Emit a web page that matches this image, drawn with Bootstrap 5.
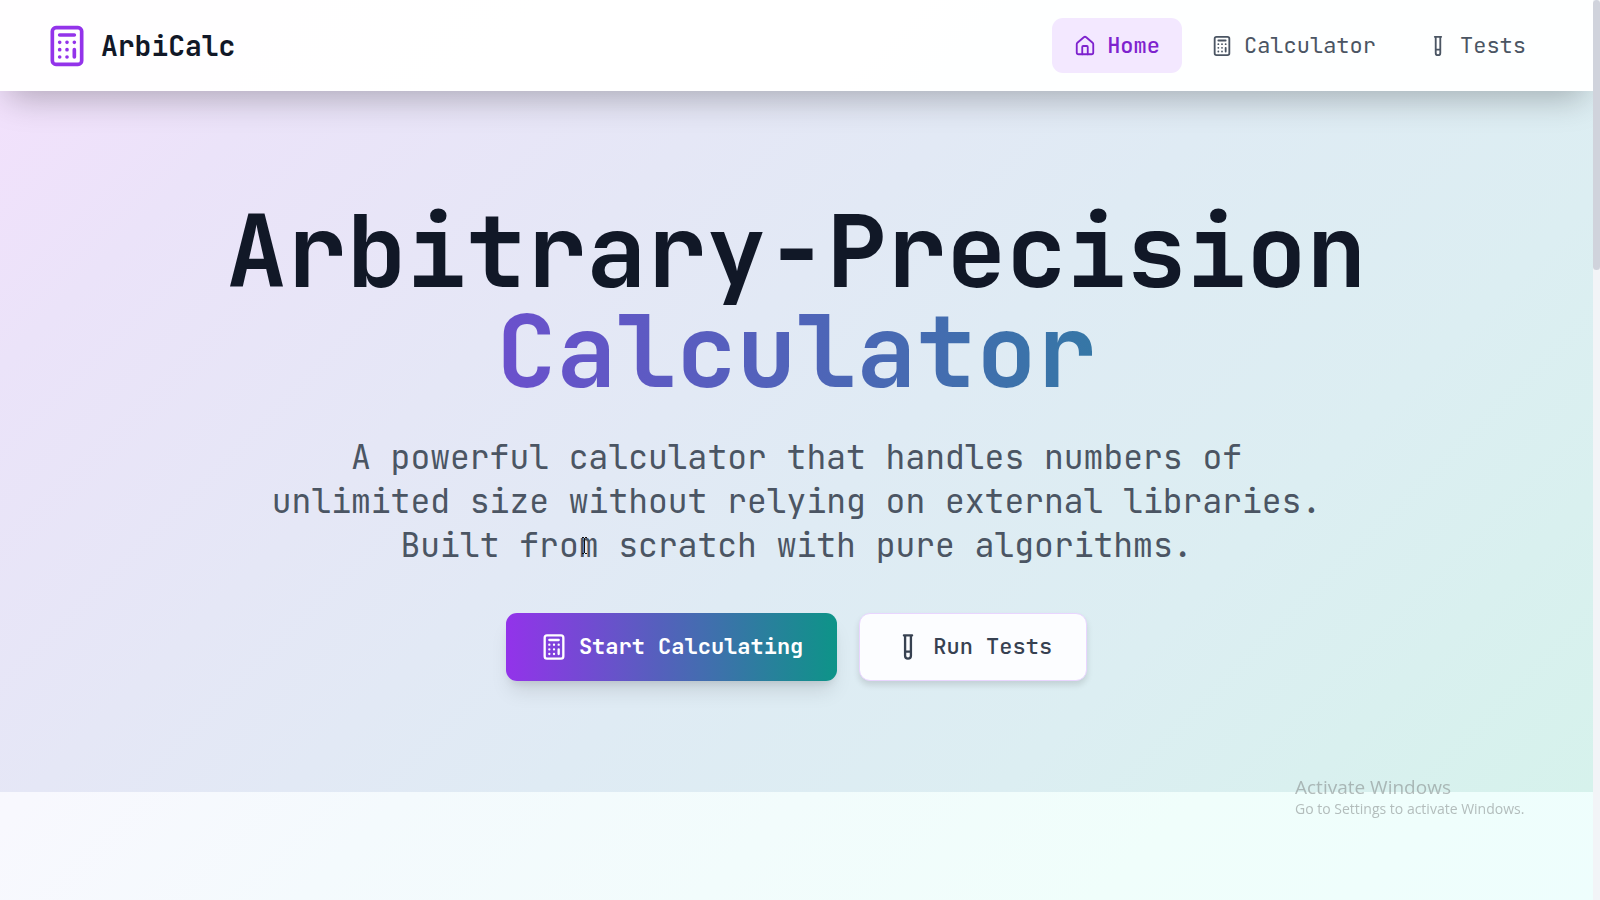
<!DOCTYPE html>
<html lang="en">
<head>
<meta charset="utf-8">
<meta name="viewport" content="width=device-width, initial-scale=1">
<title>ArbiCalc</title>
<link href="https://cdn.jsdelivr.net/npm/bootstrap@5.3.0/dist/css/bootstrap.min.css" rel="stylesheet">
<style>
  body {
    font-family: "JetBrains Mono", "DejaVu Sans Mono", monospace;
    font-size: 22px;
    line-height: 32px;
    color: #111827;
    padding-right: 7px;
    background: linear-gradient(135deg, #faf5ff, #f8f8fe 33%, #f4fafd 48%, #f0fefb 80%, #eefefd);
  }
  .icon { fill: none; stroke: currentColor; stroke-width: 2; stroke-linecap: round; stroke-linejoin: round; flex: none; }
  .topbar {
    background: rgba(255, 255, 255, .9);
    box-shadow: 0 14px 34px -8px rgba(0, 0, 0, .28);
    padding: 18px 45px;
    z-index: 2;
  }
  .topbar .navbar-brand { color: #111827; gap: 12px; font-size: 28px; line-height: 44px; font-weight: 700; }
  .topbar .navbar-brand svg { color: #9333ea; }
  .topbar .navbar-nav { gap: 7px; }
  .topbar .navbar-nav .nav-link {
    color: #4b5563;
    padding: 12px 22px 11px;
    border-radius: 11px;
    gap: 11px;
  }
  .topbar .navbar-nav .nav-link.active { background: #f3e8ff; color: #7e22ce; font-weight: 500; }
  .hero {
    background: linear-gradient(135deg, #f2e1fc, #ebe3f9 12%, #e5e7f6 32%, #dfebf4 54%, #dceef2 74%, #d6f2ec);
    padding: 110px 44px 111px;
  }
  .hero h1 { font-size: 100px; line-height: 100px; font-weight: 700; margin-bottom: 34px; }
  .hero h1 span {
    background: linear-gradient(to right, #9333ea, #0d9488);
    -webkit-background-clip: text;
    background-clip: text;
    color: transparent;
  }
  .tagline { font-size: 33px; line-height: 44px; color: #4b5563; max-width: 1068px; margin-bottom: 46px; }
  .text-cursor { left: 2px; top: 14px; }
  .cta-row { gap: 22px; }
  .cta { border-radius: 11px; gap: 11px; font-size: 22px; line-height: 32px; padding: 18px 34px; }
  .cta-main, .cta-main:hover {
    color: #fff;
    border: 0;
    font-weight: 600;
    background: linear-gradient(to right, #9333ea, #0d9488);
    box-shadow: 0 14px 20px -4px rgba(0, 0, 0, .1), 0 6px 8px -4px rgba(0, 0, 0, .1);
  }
  .cta-alt, .cta-alt:hover {
    color: #374151;
    background: #fcfdff;
    border: 1px solid #e9d5ff;
    padding: 17px 34px;
    font-weight: 500;
    box-shadow: 0 4px 6px rgba(0, 0, 0, .12);
  }
  .watermark {
    right: 69px;
    bottom: 80px;
    width: 236px;
    font: 15px/22px "Segoe UI", "Open Sans", sans-serif;
    color: rgba(130, 135, 135, .55);
    pointer-events: none;
  }
  .watermark strong { font-size: 19px; font-weight: 400; }
  .watermark span { font-size: 14px; }
  .scroll-track { width: 7px; background: #f2f4f7; z-index: 5; }
  .scroll-thumb { height: 30%; background: #d0d3dc; border-radius: 4px; }
</style>
</head>
<body class="min-vh-100 position-relative">
<svg class="d-none" xmlns="http://www.w3.org/2000/svg">
  <symbol id="calc" viewBox="0 0 24 24">
    <rect x="4" y="2" width="16" height="20" rx="2"/>
    <path d="M8 6h8M16 14v4M16 10h.01M12 10h.01M8 10h.01M12 14h.01M8 14h.01M12 18h.01M8 18h.01"/>
  </symbol>
  <symbol id="house" viewBox="0 0 24 24">
    <path d="M15 21v-8a1 1 0 0 0-1-1h-4a1 1 0 0 0-1 1v8"/>
    <path d="M3 10a2 2 0 0 1 .709-1.528l7-5.999a2 2 0 0 1 2.582 0l7 5.999A2 2 0 0 1 21 10v9a2 2 0 0 1-2 2H5a2 2 0 0 1-2-2z"/>
  </symbol>
  <symbol id="tube" viewBox="0 0 24 24">
    <path d="M14.5 2v17.5c0 1.4-1.1 2.5-2.5 2.5s-2.5-1.1-2.5-2.5V2M8.5 2h7M14.5 16h-5"/>
  </symbol>
</svg>

<header class="topbar navbar navbar-expand position-relative d-flex justify-content-between">
  <a class="navbar-brand d-flex align-items-center p-0 m-0" href="#">
    <svg class="icon" width="44" height="44" aria-hidden="true"><use href="#calc"/></svg>
    <span>ArbiCalc</span>
  </a>
  <nav class="navbar-nav" aria-label="Main">
    <a class="nav-link active d-flex align-items-center" aria-current="page" href="#home"><svg class="icon" width="22" height="22" aria-hidden="true"><use href="#house"/></svg>Home</a>
    <a class="nav-link d-flex align-items-center" href="#calculator"><svg class="icon" width="22" height="22" aria-hidden="true"><use href="#calc"/></svg>Calculator</a>
    <a class="nav-link d-flex align-items-center" href="#tests"><svg class="icon" width="22" height="22" aria-hidden="true"><use href="#tube"/></svg>Tests</a>
  </nav>
</header>

<main>
  <section class="hero text-center" id="home">
    <h1>Arbitrary-Precision <span class="d-block">Calculator</span></h1>
    <p class="tagline mx-auto">A powerful calculator that handles numbers of unlimited size without relying on external libraries. Built fro<span class="position-relative"><svg class="text-cursor position-absolute" width="7" height="17" viewBox="0 0 7 17" fill="none" stroke="#111" aria-hidden="true"><path d="M1 .5h2M4 .5h2M3.500 1v15M1 16.500h2M4 16.500h2"/></svg></span>m scratch with pure algorithms.</p>
    <div class="cta-row d-flex flex-wrap justify-content-center">
      <button type="button" class="btn cta cta-main d-flex align-items-center"><svg class="icon" width="28" height="28" aria-hidden="true"><use href="#calc"/></svg>Start Calculating</button>
      <button type="button" class="btn cta cta-alt d-flex align-items-center"><svg class="icon" width="28" height="28" aria-hidden="true"><use href="#tube"/></svg>Run Tests</button>
    </div>
  </section>
</main>

<div class="watermark position-fixed">
  <strong class="d-block">Activate Windows</strong>
  <span class="d-block">Go to Settings to activate Windows.</span>
</div>
<div class="scroll-track position-fixed top-0 end-0 h-100" aria-hidden="true"><div class="scroll-thumb"></div></div>
<script src="https://cdn.jsdelivr.net/npm/bootstrap@5.3.0/dist/js/bootstrap.bundle.min.js"></script>
</body>
</html>
